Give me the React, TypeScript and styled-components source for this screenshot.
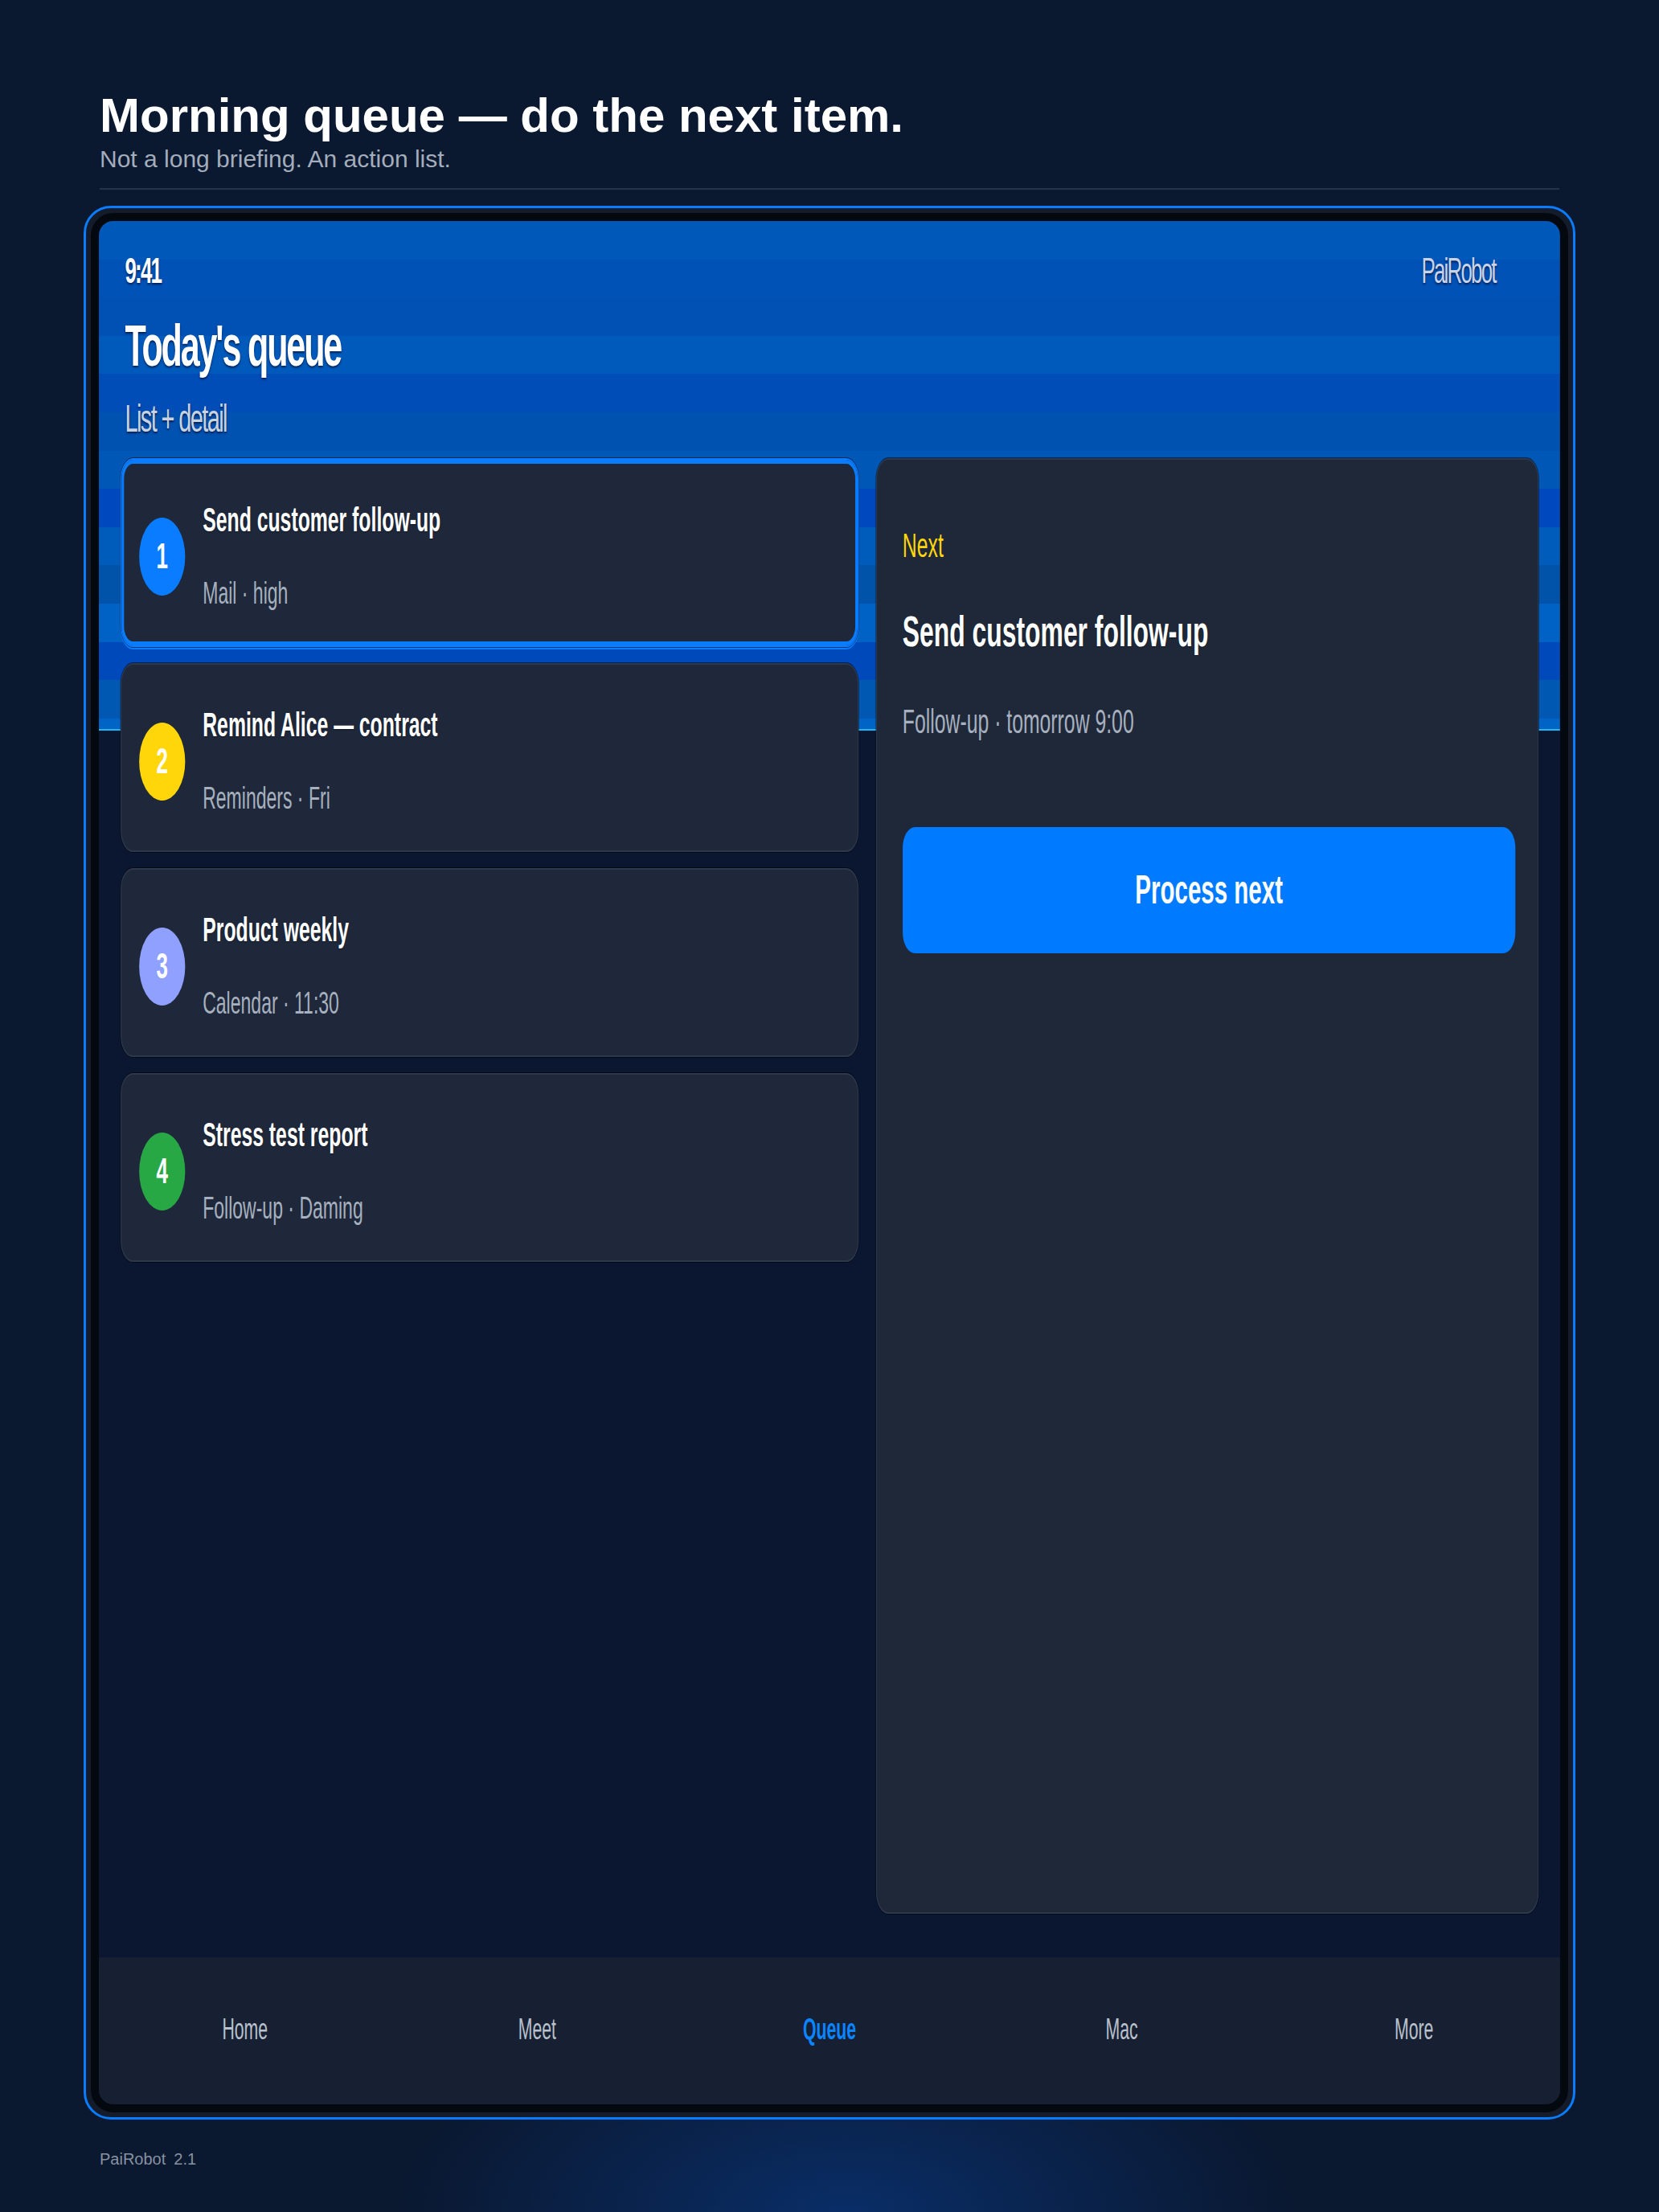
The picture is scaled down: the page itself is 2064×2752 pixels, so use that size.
import styled, { createGlobalStyle } from "styled-components";

// the phone screen is drawn wide and squeezed horizontally, like the mockup
const SCALE = 0.59;
const SCREEN_W = 1818;
const SCREEN_H = 2343;

const BAND = 47.6;
const bands = [
  "#0058b9",
  "#0052b6",
  "#0051b3",
  "#005abb",
  "#004db8",
  "#0052b0",
  "#0057b5",
  "#0048bd",
  "#005cba",
  "#0053a8",
  "#0062c4",
  "#0049ba",
  "#0058b3",
  "#0064c6",
];
const heroStops = bands
  .map((c, i) => `${c} ${i * BAND}px ${Math.min((i + 1) * BAND, 632)}px`)
  .join(", ");
const hero = `linear-gradient(180deg, ${heroStops}, #22b6ee 632px 634px, #0b1730 634px)`;

const GlobalStyle = createGlobalStyle`
  html, body {
    margin: 0;
    padding: 0;
    background: #0a1830;
  }
  body {
    font-family: "Liberation Sans", Arial, sans-serif;
    color: #ffffff;
  }
`;

const Page = styled.main`
  min-height: 100vh;
  box-sizing: border-box;
  padding: 108px 124px 40px;
  background: radial-gradient(
      ellipse 560px 260px at 51% 100%,
      rgba(8, 72, 170, 0.45),
      rgba(8, 72, 170, 0) 100%
    ),
    #0a1830;
`;

const Title = styled.h1`
  margin: 0;
  font-size: 60px;
  line-height: 72px;
  font-weight: 700;
  color: #ffffff;
`;

const Subtitle = styled.p`
  margin: 0;
  font-size: 30px;
  line-height: 36px;
  color: #a3adbb;
`;

const Divider = styled.hr`
  margin: 18px 0 0;
  height: 2px;
  border: 0;
  background: #263245;
`;

const Frame = styled.section`
  margin: 20px -20px 0;
  border: 3px solid #0a7cff;
  border-radius: 34px;
  padding: 6px;
  background: #141b2a;
`;

const Bezel = styled.div`
  border: 10px solid #04080f;
  border-radius: 28px;
  height: ${SCREEN_H}px;
  overflow: hidden;
  background: #0b1730;
`;

const Screen = styled.div`
  width: ${SCREEN_W / SCALE}px;
  height: 100%;
  transform: scaleX(${SCALE});
  transform-origin: 0 0;
  display: flex;
  flex-direction: column;
  background: ${hero};
  font-family: "Liberation Sans", Arial, sans-serif;
`;

const StatusBar = styled.div`
  display: flex;
  justify-content: space-between;
  align-items: baseline;
  padding: 36px 136px 0 55px;
  font-size: 44px;
  line-height: 52.8px;
  letter-spacing: -0.07em;
  text-shadow: 0 2px 3px rgba(0, 10, 50, 0.7);
`;

const Clock = styled.span`
  font-weight: 700;
  color: #ffffff;
`;

const Brand = styled.span`
  color: #c8d3e6;
`;

const Heading = styled.div`
  padding: 22px 55px 0;
  text-shadow: 0 2px 3px rgba(0, 10, 50, 0.7);
`;

const ScreenTitle = styled.h2`
  margin: 0;
  font-size: 73px;
  line-height: 87.6px;
  font-weight: 700;
  letter-spacing: -0.05em;
  color: #ffffff;
`;

const ScreenSub = styled.p`
  margin: 17.5px 0 0;
  font-size: 49px;
  line-height: 58.8px;
  letter-spacing: -0.055em;
  color: #c9d2df;
`;

const Body = styled.div`
  flex: 1;
  min-height: 0;
  display: grid;
  grid-template-columns: 1.113fr 1fr;
  gap: 37px;
  padding: 20.5px 45px 54px 46px;
`;

const List = styled.div`
  align-self: start;
  display: flex;
  flex-direction: column;
  gap: 20px;
`;

const Card = styled.div<{ $active?: boolean }>`
  height: 235px;
  box-sizing: border-box;
  display: flex;
  align-items: center;
  gap: 37px;
  padding: 0 40px 0 37px;
  background: #1e283a;
  border: 2px solid ${(p) => (p.$active ? "#0a7cff" : "#2c384c")};
  border-radius: 26px;
  box-shadow: 0 0 0 1px rgba(0, 0, 0, 0.55)
    ${(p) => (p.$active ? ", 0 2px 0 1px #0a7cff, inset 0 0 0 5px #0a7cff" : "")};
`;

const Badge = styled.span<{ $color: string }>`
  flex: none;
  width: 97px;
  height: 97px;
  margin-top: 9px;
  border-radius: 50%;
  background: ${(p) => p.$color};
  display: flex;
  align-items: center;
  justify-content: center;
  font-size: 44px;
  font-weight: 700;
  color: #ffffff;
`;

const ItemText = styled.div`
  display: flex;
  flex-direction: column;
  gap: 42px;
  padding-top: 7px;
`;

const ItemTitle = styled.span`
  font-size: 42px;
  line-height: 50px;
  font-weight: 700;
  color: #ffffff;
  text-shadow: 0 1px 2px rgba(0, 0, 0, 0.4);
`;

const ItemMeta = styled.span`
  font-size: 39px;
  line-height: 47px;
  color: #a7b0be;
`;

const Detail = styled.aside`
  display: flex;
  flex-direction: column;
  padding: 82px 47px 0 54px;
  background: #1e2839;
  border: 2px solid #2c384c;
  border-radius: 26px;
  box-shadow: 0 0 0 1px rgba(0, 0, 0, 0.55);
`;

const NextLabel = styled.span`
  font-size: 42px;
  line-height: 50px;
  color: #ffd60a;
`;

const DetailTitle = styled.h3`
  margin: 49px 0 0;
  font-size: 54px;
  line-height: 65px;
  font-weight: 700;
  color: #ffffff;
  text-shadow: 0 1px 2px rgba(0, 0, 0, 0.4);
`;

const DetailMeta = styled.p`
  margin: 54.5px 0 0;
  font-size: 42px;
  line-height: 50px;
  color: #a7b0be;
`;

const ProcessButton = styled.button`
  margin-top: 106px;
  width: 100%;
  height: 157px;
  border: 0;
  border-radius: 26px;
  background: #007aff;
  color: #ffffff;
  font: 700 50px/1 "Liberation Sans", Arial, sans-serif;
  cursor: pointer;
`;

const TabBar = styled.nav`
  flex: none;
  height: 183px;
  box-sizing: border-box;
  padding-bottom: 5px;
  background: #172033;
  display: grid;
  grid-template-columns: repeat(5, 1fr);
  align-items: center;
`;

const Tab = styled.span<{ $active?: boolean }>`
  text-align: center;
  font-size: 36px;
  line-height: 43px;
  font-weight: ${(p) => (p.$active ? 700 : 400)};
  color: ${(p) => (p.$active ? "#0a84ff" : "#b9c1cc")};
`;

const Footer = styled.footer`
  margin-top: 37px;
  font-size: 20px;
  line-height: 24px;
  color: #8791a1;
`;

const Version = styled.span`
  margin-left: 10px;
`;

const items = [
  { n: 1, title: "Send customer follow-up", meta: "Mail · high", color: "#0a7cff" },
  { n: 2, title: "Remind Alice — contract", meta: "Reminders · Fri", color: "#ffd60a" },
  { n: 3, title: "Product weekly", meta: "Calendar · 11:30", color: "#8fa0ff" },
  { n: 4, title: "Stress test report", meta: "Follow-up · Daming", color: "#28a745" },
];

const tabs = ["Home", "Meet", "Queue", "Mac", "More"];

export default function App() {
  return (
    <>
      <GlobalStyle />
      <Page>
        <Title>Morning queue — do the next item.</Title>
        <Subtitle>Not a long briefing. An action list.</Subtitle>
        <Divider />
        <Frame>
          <Bezel>
            <Screen>
              <StatusBar>
                <Clock>9:41</Clock>
                <Brand>PaiRobot</Brand>
              </StatusBar>
              <Heading>
                <ScreenTitle>Today's queue</ScreenTitle>
                <ScreenSub>List + detail</ScreenSub>
              </Heading>
              <Body>
                <List>
                  {items.map((it, i) => (
                    <Card key={it.n} $active={i === 0}>
                      <Badge $color={it.color}>{it.n}</Badge>
                      <ItemText>
                        <ItemTitle>{it.title}</ItemTitle>
                        <ItemMeta>{it.meta}</ItemMeta>
                      </ItemText>
                    </Card>
                  ))}
                </List>
                <Detail>
                  <NextLabel>Next</NextLabel>
                  <DetailTitle>Send customer follow-up</DetailTitle>
                  <DetailMeta>Follow-up · tomorrow 9:00</DetailMeta>
                  <ProcessButton>Process next</ProcessButton>
                </Detail>
              </Body>
              <TabBar>
                {tabs.map((t) => (
                  <Tab key={t} $active={t === "Queue"}>
                    {t}
                  </Tab>
                ))}
              </TabBar>
            </Screen>
          </Bezel>
        </Frame>
        <Footer>
          PaiRobot<Version>2.1</Version>
        </Footer>
      </Page>
    </>
  );
}
